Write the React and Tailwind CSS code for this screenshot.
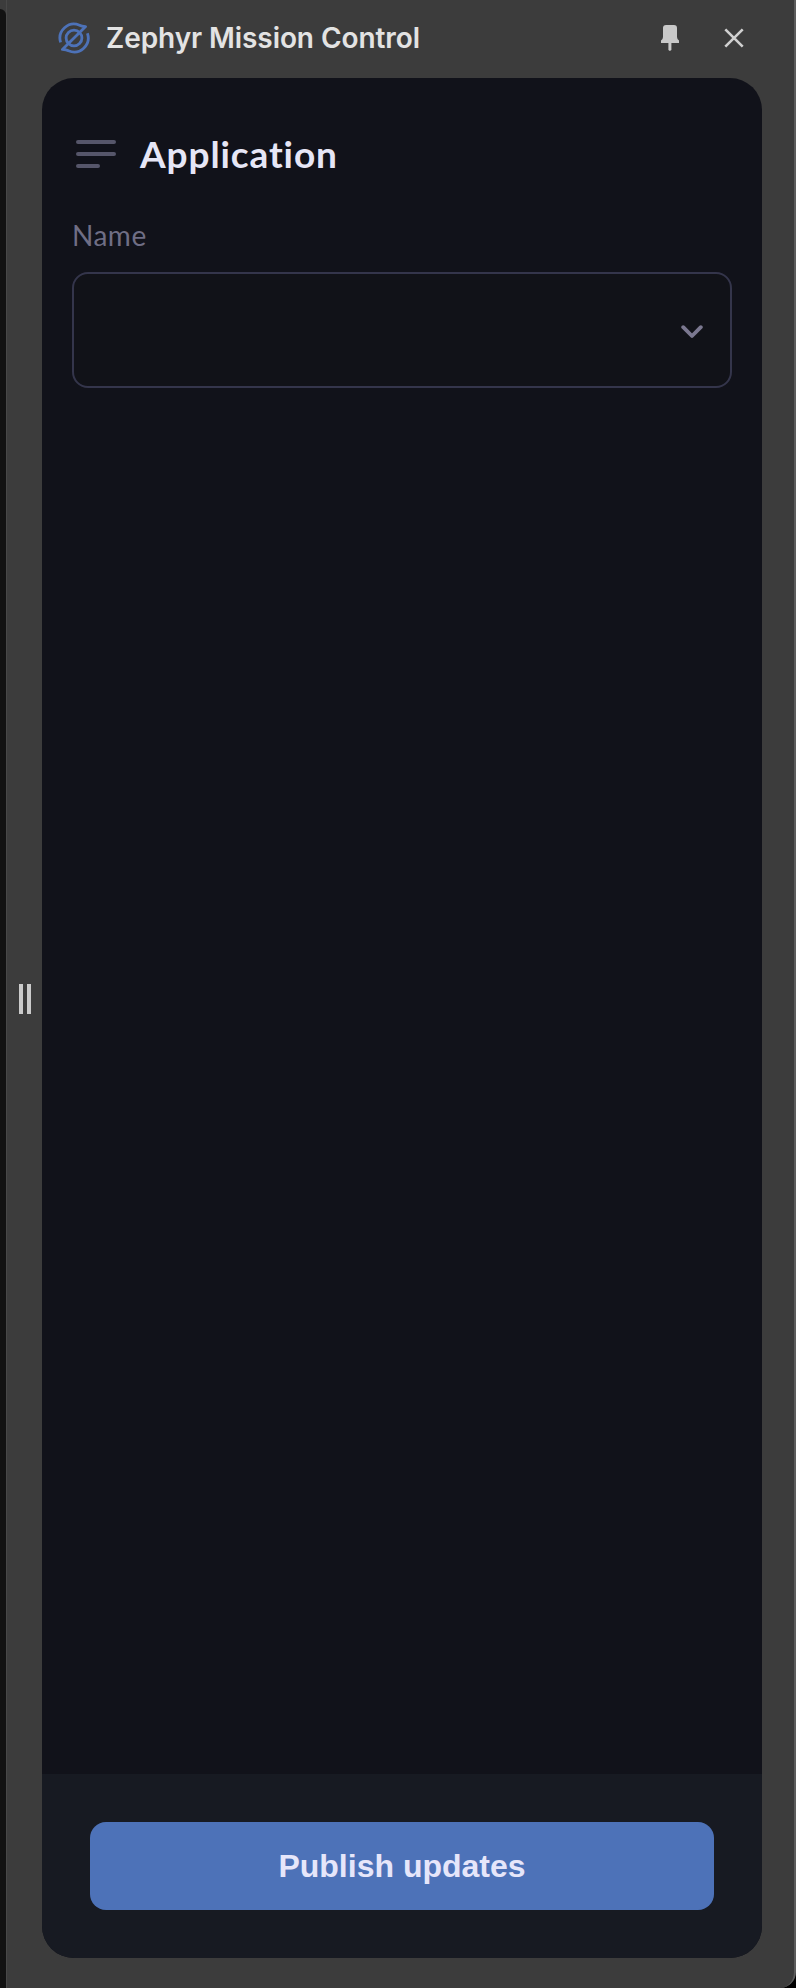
function Logo() {
  return (
    <svg className="size-8 shrink-0" viewBox="0 0 32 32" fill="none" stroke="#4d72b8" strokeWidth="2.8" strokeLinejoin="round">
      <path d="M2.6 20.4A14.1 14.1 0 0 1 21.5 3.2Q23.5 4.3 27.6 4.6L4.400 27.400Q8.500 27.700 10.500 28.800A14.100 14.100 0 0 0 29.400 11.200" />
      <circle cx="16" cy="16" r="7.9" />
    </svg>
  );
}

function PinIcon() {
  return (
    <svg className="h-[26px] w-[18px]" viewBox="0 0 18 26" fill="#c9c9c9">
      <path d="M5 0H13Q16 0 16 3V12Q16 14 18 15.5V18H0V15.5Q2 14 2 12V3Q2 0 5 0Z" />
      <path d="M7.4 18H10.4V25L8.9 26L7.4 25Z" />
    </svg>
  );
}

function CloseIcon() {
  return (
    <svg className="size-5" viewBox="0 0 20 20" fill="none" stroke="#d0d0d0" strokeWidth="2.6">
      <path d="M1.3 1.3L18.7 18.7M18.7 1.3L1.3 18.7" />
    </svg>
  );
}

function TitleBar() {
  return (
    <header className="flex h-[78px] shrink-0 items-center pb-[2px] pl-[16px] pr-[18px]">
      <Logo />
      <h1 className="ml-4 flex-1 whitespace-nowrap font-['Inter',sans-serif] text-[28px] font-[560] leading-9 tracking-[-0.08px] text-[#e3e3e3]">
        Zephyr Mission Control
      </h1>
      <button aria-label="Pin" className="mr-[45px]"><PinIcon /></button>
      <button aria-label="Close"><CloseIcon /></button>
    </header>
  );
}

export default function App() {
  return (
    <div className="w-[796px] bg-black">
      <div className="flex h-[1988px] overflow-hidden rounded-br-[16px] border-r-2 border-[#5c5c5c] bg-[#3c3c3c]">
        <div className="mt-[9px] w-[6px] shrink-0 rounded-tr-[6px] bg-[#121212]" />
        <div className="flex w-9 shrink-0 items-center justify-center gap-[4px] border-l border-[#484848] pt-[9px]">
          <div className="h-[30px] w-1 bg-[#cbcbcb]" />
          <div className="h-[30px] w-1 bg-[#cbcbcb]" />
        </div>
        <div className="flex w-[720px] shrink-0 flex-col">
          <TitleBar />
          <main className="flex h-[1880px] flex-col overflow-hidden rounded-[32px] bg-[#11121a]">
            <div className="flex flex-1 flex-col px-[30px] pt-[52px]">
              <div className="flex items-center pl-1">
                <svg className="h-7 w-10" viewBox="0 0 40 28" stroke="#56566a" strokeWidth="4" strokeLinecap="round">
                  <path d="M2 2H38M2 14H38M2 26H22" />
                </svg>
                <h2 className="ml-6 font-['Lato',sans-serif] text-[37px] font-bold leading-[48px] tracking-[0.9px] text-[#e6e6f6]">Application</h2>
              </div>
              <label className="mt-[39px] font-['Lato',sans-serif] text-[28px] leading-9 tracking-[0.5px] text-[#6f6e85]">Name</label>
              <button aria-label="Name" className="mt-[19px] flex h-[116px] items-center justify-end rounded-2xl border-2 border-[#34354b] bg-[#111218] pt-[3px] pr-[27px]">
                <svg className="h-[14px] w-[22px]" viewBox="0 0 22 14" fill="none" stroke="#7b7890" strokeWidth="3.8" strokeLinecap="round" strokeLinejoin="round">
                  <path d="M2.2 2.2L11 11L19.8 2.2" />
                </svg>
              </button>
            </div>
            <footer className="h-[184px] shrink-0 bg-[#171a22] px-12 pt-12">
              <button className="h-[88px] w-full rounded-2xl bg-[#4d72b8] font-['Liberation_Sans',sans-serif] text-[32px] font-bold text-[#e6e6fa]">
                Publish updates
              </button>
            </footer>
          </main>
        </div>
      </div>
    </div>
  );
}
